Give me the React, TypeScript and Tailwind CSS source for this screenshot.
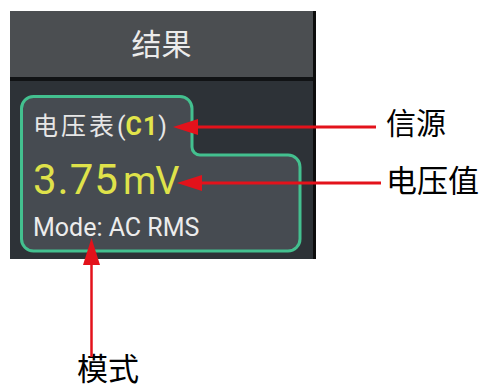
import * as React from "react";

const CJK = { fontFamily: 'Roboto, "Noto Sans CJK SC", sans-serif' };

const Callouts = () => (
  <svg className="absolute left-0 top-0 pointer-events-none" width={485} height={387} viewBox="0 0 485 387">
    {/* 信源 */}
    <line x1={190} y1={127} x2={376} y2={127} stroke="#e3121b" strokeWidth={3} />
    <polygon points="173,127 198,119 198,135" fill="#e3121b" />
    {/* 电压值 */}
    <line x1={195} y1={183} x2={381} y2={183} stroke="#e3121b" strokeWidth={3} />
    <polygon points="177,183 202,175 202,191" fill="#e3121b" />
    {/* 模式 */}
    <line x1={91.5} y1={255} x2={91.5} y2={357} stroke="#e3121b" strokeWidth={2.5} />
    <polygon points="91.5,238 83,265 100,265" fill="#e3121b" />
  </svg>
);

const ResultCard = () => (
  <div className="relative w-[283px] h-[158px]">
    <svg className="absolute inset-0" width={283} height={158} viewBox="0 0 283 158">
      <path
        d="M1.5,13.5 A12,12 0 0 1 13.5,1.5 H160 A12,12 0 0 1 172,13.5 V52 A8,8 0 0 0 180,60 H268 A12,12 0 0 1 280,72 V144 A12,12 0 0 1 268,156 H13.5 A12,12 0 0 1 1.5,144 Z"
        fill="#464b51"
        stroke="#43c08f"
        strokeWidth={3}
      />
    </svg>
    <div className="relative flex flex-col pl-[13px] pt-[18px]" style={CJK}>
      <div className="text-[25px] leading-[28px] text-[#e6e6e6] whitespace-nowrap">
        <span className="tracking-[3px]">电压表</span>
        <span>(</span>
        <span className="font-bold text-[#e2e54a] tracking-[1px]">C1</span>
        <span>)</span>
      </div>
      <div className="mt-[18px] flex items-baseline text-[#dfe24a] leading-[42px]">
        <span className="text-[42px] tracking-[1px]">3.75</span>
        <span className="text-[38px] tracking-[-1px] ml-[4px]">mV</span>
      </div>
      <div className="mt-[13px] text-[25px] leading-[25px] text-[#ececec]">Mode: AC RMS</div>
    </div>
  </div>
);

export default function App() {
  return (
    <div className="relative w-[485px] h-[387px] overflow-hidden bg-white" style={CJK}>
      <div className="ml-[10px] mt-[11px] w-[306px] border-r-[3px] border-[#0d0d0d]">
        <div className="h-[66px] bg-[#4b4e51] flex items-center justify-center text-[30px] text-[#ebebeb]">
          结果
        </div>
        <div className="h-[4px] bg-[#111315]" />
        <div className="bg-[#2d3237] pt-[14px] pb-[6px] pl-[10px]">
          <ResultCard />
        </div>
      </div>

      <div className="absolute left-[386px] top-[104px] text-[30px] leading-[40px] text-black">信源</div>
      <div className="absolute left-[386px] top-[162px] text-[31px] leading-[40px] text-black">电压值</div>
      <div className="absolute left-[77px] top-[350px] text-[31px] leading-[40px] text-black">模式</div>

      <Callouts />
    </div>
  );
}
